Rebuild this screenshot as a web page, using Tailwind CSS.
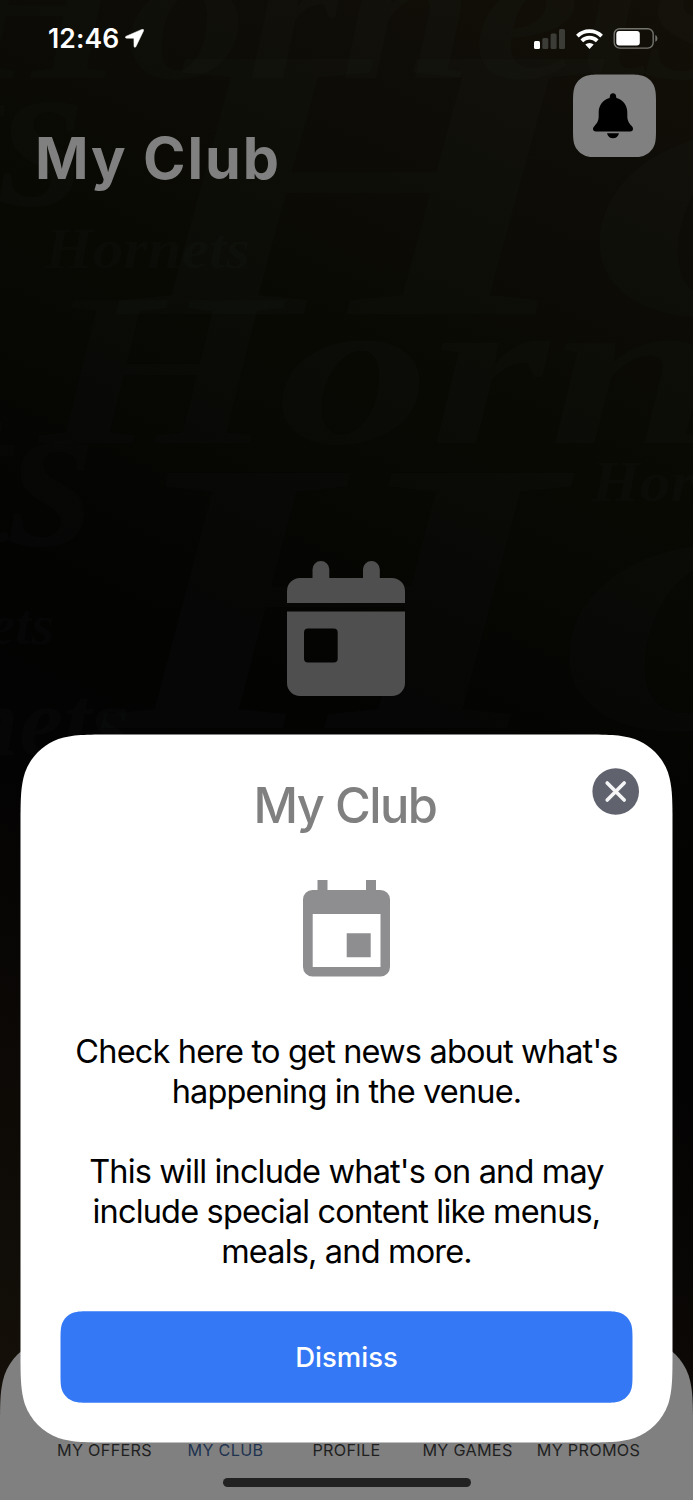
<!DOCTYPE html>
<html lang="en">
<head>
<meta charset="utf-8">
<title>My Club</title>
<script src="https://cdn.jsdelivr.net/npm/@tailwindcss/browser@4"></script>
</head>
<body class="bg-black font-['Inter',sans-serif]">
<div class="relative flex h-[1500px] w-[693px] flex-col overflow-hidden bg-[linear-gradient(205deg,#120f08_0%,#090904_28%,#030302_48%,#040303_60%,#151009_95%)]">

  <!-- Wallpaper lettering -->
  <svg class="absolute inset-0 h-[1500px] w-[693px]" viewBox="0 0 693 1500" fill="#9db4b8" fill-opacity=".02" font-family="Liberation Serif" font-weight="700" font-style="italic" aria-hidden="true">
    <text transform="translate(-60 78) scale(1.2 1)" font-size="200">Hornets</text>
    <text transform="translate(120 314) scale(1.55 1)" font-size="390">Hornets</text>
    <text transform="translate(45 268) scale(1.06 1)" font-size="58">Hornets</text>
    <text transform="translate(40 443) scale(1.4 1)" font-size="218">Hornets</text>
    <text transform="translate(592 501) scale(1.06 1)" font-size="58">Hornets</text>
    <text x="95" y="545" font-size="218" text-anchor="end">Hornets</text>
    <text x="54" y="644" font-size="58" text-anchor="end">Hornets</text>
    <text transform="translate(105 728) scale(1.5 1)" font-size="390">Hornets</text>
    <text x="130" y="755" font-size="100" text-anchor="end">Hornets</text>
    <text x="85" y="205" font-size="218" text-anchor="end">Hornets</text>
  </svg>

  <!-- Status bar -->
  <div class="relative flex h-[74px] shrink-0 items-start justify-between pl-[48px] pr-[35.500px] pt-[22px] text-white">
    <div class="flex items-center">
      <span class="text-[26.5px] leading-[32px] font-semibold tracking-[0.100px]">12:46</span>
      <svg class="ml-[6px] h-[19px] w-[19px]" viewBox="0 0 19 19" fill="#fff"><path d="M16.800.4 1.200 7.200C-.2 7.900.2 9.200 1.500 9.200l7.400.1.1 7.800c0 1.400 1.400 1.700 2 .300L18.600 1.700C19 .6 17.900-.1 16.800.4Z" stroke="#fff" stroke-width=".5"/></svg>
    </div>
    <div class="flex items-center gap-[10px] pt-[6px]">
      <svg class="h-[20px] w-[32px]" viewBox="0 0 32 20"><rect x="0" y="12" width="6" height="8" rx="1.500" fill="#fff"/><g fill="#3c3c37"><rect x="8.300" y="9" width="6" height="11" rx="1.500"/><rect x="16.600" y="4.500" width="6" height="15.500" rx="1.500"/><rect x="25" y="0" width="6" height="20" rx="1.500"/></g></svg>
      <svg class="h-[20px] w-[27px]" viewBox="0 0 27 20" fill="none" stroke="#fff"><path d="M1.400 7.200a17.200 17.200 0 0 1 24.200 0" stroke-width="3.800"/><path d="M5.800 11.800a10.900 10.900 0 0 1 15.400 0" stroke-width="3.800"/><path d="M9.300 15.600a6 6 0 0 1 8.400 0L13.500 19.900Z" fill="#fff" stroke="none"/></svg>
      <svg class="h-[21px] w-[45px]" viewBox="0 0 45 21"><rect x="1.200" y=".7" width="39" height="19.400" rx="5.500" fill="none" stroke="#74746f" stroke-width="1.400"/><rect x="3.300" y="3" width="23.500" height="14.600" rx="3" fill="#fff"/><path d="M42.300 7v6.800c2.800-1.300 2.800-5.500 0-6.800Z" fill="#74746f"/></svg>
    </div>
  </div>

  <!-- Header -->
  <header class="relative flex h-[116px] shrink-0 justify-between pl-[35px] pr-[37.500px]">
    <h1 class="pt-[49px] text-[57.500px] leading-[70px] font-bold tracking-[1.900px] text-[#808080]">My Club</h1>
    <button class="flex h-[83px] w-[83px]" aria-label="Notifications">
      <svg class="h-[83px] w-[83px]" viewBox="0 0 83 83">
        <path data-squircle="83,83,20" transform="translate(0 .5)" fill="#808080"/>
        <path d="M40 19.200c2 0 3.300 1.600 3.200 3.700l.2 1.100c6.800 1.700 10.900 7.400 10.900 14.300v3.200c0 4.900 1.300 7.300 4.200 10.300 1.300 1.300 1.500 2 1.500 3.200 0 1.500-1 2.500-2.800 2.500H22.900c-1.800 0-2.900-1-2.900-2.500 0-1.200.4-2 1.700-3.300 2.900-3 4-5.400 4-10.200v-3.200c0-6.900 4.100-12.600 10.900-14.300l.2-1.100c-.1-2.100 1.200-3.700 3.200-3.700ZM34 59.200h12c-.6 3.100-3 5-6 5s-5.400-1.900-6-5Z" fill="#000"/>
      </svg>
    </button>
  </header>

  <!-- Empty state -->
  <main class="relative flex grow justify-center pt-[371px] pr-[1px]">
    <svg class="h-[136px] w-[118px]" viewBox="0 0 118 136" fill="#4f4f4f"><path d="M0 42V30A13 13 0 0 1 13 17H25.500V8.500a8.400 8.400 0 0 1 16.800 0V17H76V8.500a8.400 8.400 0 0 1 16.800 0V17H105a13 13 0 0 1 13 13v12Z"/><path fill-rule="evenodd" d="M0 50.500H118V122a13 13 0 0 1-13 13H13A13 13 0 0 1 0 122ZM21 67.500a4 4 0 0 0-4 4V97.500a4 4 0 0 0 4 4H46.700a4 4 0 0 0 4-4V71.500a4 4 0 0 0-4-4Z"/></svg>
  </main>

  <!-- Tab bar -->
  <nav class="relative h-[163px] shrink-0">
    <svg class="absolute inset-0 h-[163px] w-[693px]" viewBox="0 0 693 163"><path data-squircle="693,300,60" fill="#808080"/></svg>
    <div class="relative flex justify-center pt-[103px] text-center text-[16.200px] leading-[20px] tracking-[0.300px] whitespace-nowrap text-[#1f1f1f]">
      <span class="w-[121px]">MY OFFERS</span>
      <span class="w-[121px] text-[#1f3350]">MY CLUB</span>
      <span class="w-[121px]">PROFILE</span>
      <span class="w-[121px]">MY GAMES</span>
      <span class="w-[121px]">MY PROMOS</span>
    </div>
    <div class="relative mx-auto mt-[18px] h-[9px] w-[248px] rounded-full bg-[#222]"></div>
  </nav>

  <!-- Dialog -->
  <section class="absolute top-[734px] left-[20px] h-[709px] w-[653px]" role="dialog">
    <svg class="absolute inset-0 h-[709px] w-[653px]" viewBox="0 0 653 709"><path data-squircle="652,708,60" transform="translate(.5 .5)" fill="#fff"/></svg>
    <button class="absolute top-[34px] right-[34px] h-[47px] w-[47px]" aria-label="Close">
      <svg class="h-[47px] w-[47px]" viewBox="0 0 47 47"><circle cx="23.700" cy="23.500" r="23.300" fill="#60636e"/><path d="m15.200 15 17 17m0-17-17 17" stroke="#f5f5f7" stroke-width="3.600" stroke-linecap="round"/></svg>
    </button>
    <div class="relative flex flex-col items-center px-[40px] text-center">
      <h2 class="mt-[42px] mr-[3px] text-[48.800px] leading-[60px] font-medium tracking-[-1.500px] text-[#808080]">My Club</h2>
      <svg class="mt-[44px] mr-[1px] h-[97px] w-[87px]" viewBox="0 0 87 97" fill="#8e8e91"><path fill-rule="evenodd" d="M14.500 0h10v10H63V0h10v10h4.500a9.500 9.500 0 0 1 9.500 9.500V87a9.500 9.500 0 0 1-9.500 9.500h-68A9.500 9.500 0 0 1 0 87V19.500A9.500 9.500 0 0 1 9.500 10h5ZM9.700 34v53H77.500V34ZM43.700 53.300h24v24h-24Z"/></svg>
      <div class="mt-[55px] text-[32.500px] leading-[40px] tracking-[-0.840px] whitespace-nowrap text-black">
        <p>Check here to get news about what's<br>happening in the venue.</p>
        <p class="mt-[40px]">This will include what's on and may<br>include special content like menus,<br>meals, and more.</p>
      </div>
      <button class="relative mt-[39px] h-[92px] w-[573px] pt-px text-[27.500px] font-medium tracking-[0px] text-white">
        <svg class="absolute inset-0 h-[92px] w-[573px]" viewBox="0 0 573 92"><path data-squircle="572,91.500,20" transform="translate(.5 .2)" fill="#3478f6"/></svg>
        <span class="relative">Dismiss</span>
      </button>
    </div>
  </section>
</div>
<script>
// Continuous-curvature rounded rectangles
document.querySelectorAll('[data-squircle]').forEach(el => {
  const [w, h, r] = el.dataset.squircle.split(',').map(Number);
  const m = [1.52866, 1.08849, 0.8684, 0.63149, 0.07491, 0.37282, 0.16906].map(v => v * r);
  const [a, b, c, d, e, f, g] = m;
  const corner = P => [
    'L', P(a, 0), 'C', P(b, 0), P(c, 0), P(d, e),
    'C', P(f, g), P(g, f), P(e, d),
    'C', P(0, c), P(0, b), P(0, a)];
  const rev = P => [
    'L', P(0, a), 'C', P(0, b), P(0, c), P(e, d),
    'C', P(g, f), P(f, g), P(d, e),
    'C', P(c, 0), P(b, 0), P(a, 0)];
  const path = [
    ...rev((x, y) => x + ' ' + y),
    ...corner((x, y) => (w - x) + ' ' + y),
    ...rev((x, y) => (w - x) + ' ' + (h - y)),
    ...corner((x, y) => x + ' ' + (h - y))];
  path[0] = 'M';
  el.setAttribute('d', path.join(' ') + 'Z');
});
</script>
</body>
</html>
